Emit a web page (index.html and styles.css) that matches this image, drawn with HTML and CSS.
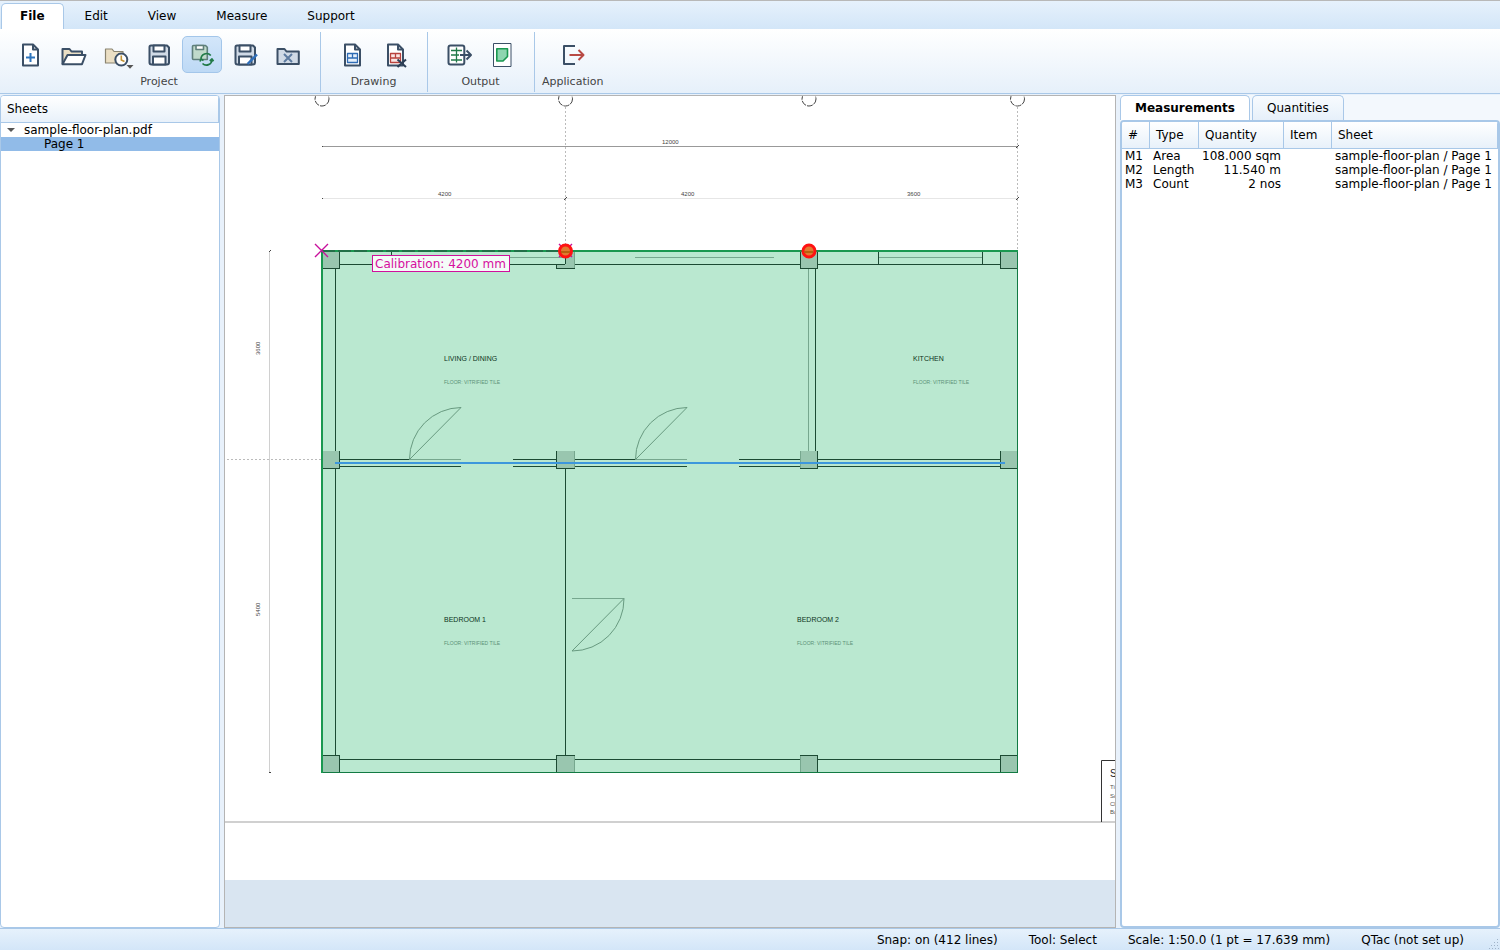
FILE: index.html
```html
<!DOCTYPE html>
<html lang="en">
<head>
<meta charset="utf-8">
<title>sample-floor-plan.pdf</title>
<link rel="stylesheet" href="styles.css">
</head>
<body>
<nav class="menu">
  <button class="menu-tab selected">File</button>
  <button class="menu-tab">Edit</button>
  <button class="menu-tab">View</button>
  <button class="menu-tab">Measure</button>
  <button class="menu-tab">Support</button>
</nav>
<header class="ribbon">
  <section class="group first">
    <div class="tools">
      <button class="tool" aria-label="New project"><svg class="icon" viewBox="0 0 28 28"><path class="slate white" d="M7 3.500h10l5 5v16H7z"/><path class="slate none" d="M17 3.500v5h5"/><path class="blue none" d="M14.500 12v9M10 16.500h9"/></svg></button>
      <button class="tool" aria-label="Open project"><svg class="icon" viewBox="0 0 28 28"><path class="slate tan" d="M3.500 23V8h7l2 2.500h10.500V14"/><path class="slate white" d="M8.500 14H26.500L23 23.200H3.500z"/></svg></button>
      <button class="tool" aria-label="Recent projects"><svg class="icon" viewBox="0 0 28 28"><path class="tanline tan" d="M3.500 22V8h6.500l2 2.500h9V22z"/><circle class="slate white" cx="19.300" cy="18.600" r="6"/><path class="gold none" d="M19.300 14.500v4.500l3.200 1.500"/><path class="arrow" d="M24.500 24h7l-3.500 3.800z"/></svg></button>
      <button class="tool" aria-label="Save project"><svg class="icon" viewBox="0 0 28 28"><path class="slate pale" d="M6 4.500h16l2 2V21.500q0 2-2 2H6.500q-2 0-2-2V6q0-1.500 1.500-1.500z"/><path class="slate white" d="M8.500 4.500h11v6h-11zM8 23.500v-8h12.500v8z"/></svg></button>
      <button class="tool active" aria-label="Auto save" aria-pressed="true"><svg class="icon" viewBox="0 0 28 28"><path class="moss greenpale" d="M5.500 4.500h12l1.800 1.800V18.500H5.500q-1 0-1-1v-12q0-1 1-1z"/><path class="moss white" d="M8 4.500h7.500v4H8z"/><path class="green none" d="M22.800 14.500a5.600 5.600 0 0 0-9.800 4M14.500 22.500a5.600 5.600 0 0 0 9.500-4M12 20.500l1-2.500 2.500 1.500M21.800 20l2.200-2 1.500 2.300"/></svg></button>
      <button class="tool" aria-label="Save project as"><svg class="icon" viewBox="0 0 28 28"><path class="slate pale" d="M6 4.500h16l2 2V21.500q0 2-2 2H6.500q-2 0-2-2V6q0-1.500 1.500-1.500z"/><path class="slate white" d="M8.500 4.500h11v6h-11zM8 23.500v-8h12.500v8z"/><path class="pen" d="M26 13.500l-9.500 9.500"/></svg></button>
      <button class="tool" aria-label="Close project"><svg class="icon" viewBox="0 0 28 28"><path class="slate pale" d="M3.500 23V8h7l2 2.500h12.300V23z"/><path class="steel none" d="M10 13l8 8M18 13l-8 8"/></svg></button>
    </div>
    <h2 class="group-name">Project</h2>
  </section>
  <section class="group">
    <div class="tools">
      <button class="tool" aria-label="Add drawing"><svg class="icon" viewBox="0 0 28 28"><path class="slate white" d="M7 3.500h10l5 5v16H7z"/><path class="slate none" d="M17 3.500v5h5"/><path class="bluethin ice" d="M9.500 12.500h10v9h-10zM9.500 17h10M14.500 12.500v4.500"/></svg></button>
      <button class="tool" aria-label="Remove drawing"><svg class="icon" viewBox="0 0 28 28"><path class="slate white" d="M7 3.500h10l5 5v16H7z"/><path class="slate none" d="M17 3.500v5h5"/><path class="redthin rose" d="M9.500 12.500h10v9h-10zM9.500 17h10M14.500 12.500v4.500"/><path class="cross none" d="M16.500 18.500l8.500 7.500M25 18.500l-8.500 7.500"/></svg></button>
    </div>
    <h2 class="group-name">Drawing</h2>
  </section>
  <section class="group">
    <div class="tools">
      <button class="tool" aria-label="Export table"><svg class="icon" viewBox="0 0 28 28"><rect class="slate white" x="3.500" y="4.500" width="15.800" height="19" rx="2"/><path class="greenthin none" d="M11.500 6.500v15M6 9.500h11M6 14h8M6 19h11"/><path class="slate none" d="M15 14h11M21.500 9.500L26 14l-4.500 4.500"/></svg></button>
      <button class="tool" aria-label="Export marked drawing"><svg class="icon" viewBox="0 0 28 28"><path class="slatethin white" d="M5.500 2.500h17.500v23H5.500z"/><path class="leaf" d="M8.800 7.800h10.700v7.700l-4.500 4.500H8.800z"/></svg></button>
    </div>
    <h2 class="group-name">Output</h2>
  </section>
  <section class="group last">
    <div class="tools">
      <button class="tool" aria-label="Exit"><svg class="icon" viewBox="0 0 28 28"><path class="slate none" d="M16 5H5v18h11"/><path class="red none" d="M10.500 14h14M19.500 9l5 5-5 5"/></svg></button>
    </div>
    <h2 class="group-name">Application</h2>
  </section>
</header>
<main class="workspace">
  <aside class="sheets">
    <h2 class="panel-head">Sheets</h2>
    <ul class="tree">
      <li class="row"><svg class="twisty" viewBox="0 0 8 4"><path d="M0 0h8L4 4z"/></svg>sample-floor-plan.pdf</li>
      <li class="row child">Page 1</li>
    </ul>
  </aside>
  <section class="viewport" aria-label="Drawing">
    <svg class="plan">
      <g transform="translate(-225 -96)">
        <rect class="paper" x="225" y="96" width="3000" height="784"/>
        <path class="frame" d="M225 822h3000"/>
        <g class="bubble">
          <circle cx="322" cy="99" r="7"/><circle cx="565.500" cy="99" r="7"/><circle cx="809" cy="99" r="7"/><circle cx="1017.500" cy="99" r="7"/>
        </g>
        <g class="crisp">
          <path class="grid" d="M565.500 107v143M1017.500 107v143M227 459.500h94"/>
          <path class="dim" d="M322 146.500h696"/>
          <path class="dimlight" d="M322 198.500h696"/>
          <path class="dimside" d="M269.500 251v521"/>
        </g>
        <path class="tick" d="M564 200l3-3M1016 200l3-3M1016 148l3-3M322 147l1-1M322 199l1-1M269 252l2-2M269 772.500h2"/>
        <g class="dimtext">
          <text x="662" y="144">12000</text><text x="438" y="196">4200</text><text x="681" y="196">4200</text><text x="907" y="196">3600</text>
          <text transform="translate(260 355) rotate(-90)">3600</text><text transform="translate(260 616) rotate(-90)">5400</text>
        </g>
        <g class="crisp">
          <rect class="area" x="322" y="251" width="695" height="521"/>
          <path class="column" d="M323 252h17v17h-17zM565 252h10v17h-19v-5h9zM800 252h18v17h-18zM1000 252h17v17h-17zM323 451h17v17h-17zM556 451h19v17h-19zM800 451h18v17h-18zM1000 451h17v17h-17zM323 755h17v17h-17zM556 755h19v17h-19zM800 755h18v17h-18zM1000 755h17v17h-17z"/>
          <path class="soft" d="M391 257.500h174M635 257.500h139M879 257.500h103M808.500 269v182M409 459.500h52M635 459.500h52M574.500 252v17M574.500 451v17M800.500 451v17M574.500 755v17M800.500 755v17M572 598.500h52"/>
          <path class="wall" d="M335.500 269v182M335.500 468v287M340 264.500h225M575 264.500h225M818 264.500h182M391.500 252v12M565.500 252v12M878.500 252v12M982.500 252v12M815.500 269v182M340 459.500h69M513 459.500h43M575 459.500h60M739 459.500h61M818 459.500h182M340 466.500h121M513 466.500h43M575 466.500h112M739 466.500h61M818 466.500h182M565.500 469v286M340 759.500h216M575 759.500h225M818 759.500h182"/>
          <path class="wall" d="M339.500 252v17M323 268.500h17M556.500 264v5M556 268.500h19M800.500 252v17M817.500 252v17M800 268.500h18M1000.500 252v17M1000 268.500h17M339.500 451v17M323 468.500h17M556.500 451v17M556 468.500h19M817.500 451v17M800 468.500h18M1000.500 451v17M1000 468.500h17M323 755.500h17M339.500 755v17M556 755.500h19M556.500 755v17M800 755.500h18M817.500 755v17M1000.500 755v17M1000 755.500h17"/>
          <path class="edge" d="M322 772.500h696M1017.500 250v523"/>
          <path class="edgethick" d="M321 251h697M322 250v523"/>
          <path class="calib" d="M322 251h243"/>
        </g>
        <path class="door" d="M409.500 459.500a52 52 0 0 1 51.500-52L409.500 459.500M635.500 459.500a52 52 0 0 1 51.500-52L635.500 459.500M624 598.500a52 52 0 0 1-52 52.500L624 598.500"/>
        <g class="room">
          <text x="444" y="361">LIVING / DINING</text><text x="913" y="361">KITCHEN</text><text x="444" y="622">BEDROOM 1</text><text x="797" y="622">BEDROOM 2</text>
        </g>
        <g class="floor">
          <text x="444" y="384">FLOOR: VITRIFIED TILE</text><text x="913" y="384">FLOOR: VITRIFIED TILE</text><text x="444" y="645">FLOOR: VITRIFIED TILE</text><text x="797" y="645">FLOOR: VITRIFIED TILE</text>
        </g>
        <path class="run" d="M335 463h670"/>
        <path class="mark" d="M315 244l13 13M328 244l-13 13M559 244l13 13M572 244l-13 13"/>
        <g class="count"><circle cx="565.500" cy="251" r="6"/><circle cx="809" cy="251" r="6"/></g>
        <path class="through" d="M561 252h9M804 252h9"/>
        <rect class="tag" x="372.500" y="255.500" width="137" height="16"/>
        <text class="tagtext" x="375" y="268">Calibration: 4200 mm</text>
        <path class="block" d="M1500 760.500H1101.500V822"/>
        <text class="title" x="1110" y="777">S</text>
        <g class="note"><text x="1110" y="789">Ti</text><text x="1110" y="798">Sc</text><text x="1110" y="806">Cl</text><text x="1110" y="814">Ba</text></g>
      </g>
    </svg>
  </section>
  <aside class="results">
    <div class="tabs" role="tablist">
      <button class="tab current" role="tab" aria-selected="true">Measurements</button>
      <button class="tab" role="tab" aria-selected="false">Quantities</button>
    </div>
    <div class="pane">
      <table class="list">
        <colgroup><col class="c-id"><col class="c-type"><col class="c-qty"><col class="c-item"><col></colgroup>
        <thead><tr><th>#</th><th>Type</th><th>Quantity</th><th>Item</th><th>Sheet</th></tr></thead>
        <tbody>
          <tr><td>M1</td><td>Area</td><td class="num">108.000 sqm</td><td></td><td>sample-floor-plan / Page 1</td></tr>
          <tr><td>M2</td><td>Length</td><td class="num">11.540 m</td><td></td><td>sample-floor-plan / Page 1</td></tr>
          <tr><td>M3</td><td>Count</td><td class="num">2 nos</td><td></td><td>sample-floor-plan / Page 1</td></tr>
        </tbody>
      </table>
    </div>
  </aside>
</main>
<footer class="status">
  <span>Snap: on (412 lines)</span><span>Tool: Select</span><span>Scale: 1:50.0 (1 pt = 17.639 mm)</span><span>QTac (not set up)</span>
  <svg class="grip" viewBox="0 0 10 10"><path d="M8 0h1v1h-1zM5 3h1v1h-1zM8 3h1v1h-1zM2 6h1v1h-1zM5 6h1v1h-1zM8 6h1v1h-1zM0 9h1v1h-1zM3 9h1v1h-1zM6 9h1v1h-1zM9 9h1v1h-1z"/></svg>
</footer>
</body>
</html>
```

FILE: styles.css
```css
* { box-sizing: border-box; }
body {
  margin: 0;
  height: 100vh;
  display: flex;
  flex-direction: column;
  overflow: hidden;
  background: #e8f1fb;
  color: #000;
  font: 12px/14px "DejaVu Sans", sans-serif;
}
button { font: inherit; color: inherit; margin: 0; }
h2 { margin: 0; font: inherit; }

.menu {
  display: flex;
  align-items: flex-end;
  height: 29px;
  padding-left: 1px;
  border-top: 1px solid #b8b8b8;
  background: linear-gradient(#e6f1fc, #d3e6f8);
}
.menu-tab {
  height: 26px;
  padding: 0 19px 2px;
  border: 1px solid transparent;
  border-bottom: 0;
  border-radius: 5px 5px 0 0;
  background: none;
}
.menu-tab.selected {
  padding: 0 18px 2px;
  border-color: #a9c8e8;
  background: #fff;
  font-weight: bold;
  margin-right: 1px;
}

.ribbon {
  display: flex;
  height: 65px;
  padding: 3px 0 1px;
  border-bottom: 1px solid #a9c8e8;
  background: linear-gradient(#fff, #e6f0fa);
}
.group {
  display: flex;
  flex-direction: column;
  align-items: center;
  padding: 4px 12px 0 11px;
  border-right: 1px solid #a9c8e8;
}
.group.first { padding-left: 10px; }
.group.last { padding: 4px 7px 0; border: 0; }
.tools { display: flex; gap: 3px; }
.tool {
  display: flex;
  align-items: center;
  justify-content: center;
  width: 40px;
  height: 37px;
  padding: 0;
  border: 1px solid transparent;
  border-radius: 5px;
  background: none;
}
.tool.active { border-color: #a3c6ea; background: linear-gradient(#d3e6fa, #bdd9f5); }
.group-name { margin-top: 2px; font-size: 11px; color: #444; }

.icon { width: 28px; height: 28px; overflow: visible; stroke-width: 2; stroke-linejoin: round; }
.slate { stroke: #3b4f66; }
.slatethin { stroke: #3b4f66; stroke-width: 1; }
.tanline { stroke: #8a8470; stroke-width: 1.2; }
.moss { stroke: #5f7f7b; stroke-width: 1.6; }
.blue { stroke: #2e75bd; }
.bluethin { stroke: #2e6bb5; stroke-width: 1.3; }
.red { stroke: #b84a44; stroke-width: 2; }
.redthin { stroke: #b8423d; stroke-width: 1.3; }
.green { stroke: #217a48; stroke-width: 1.7; }
.greenthin { stroke: #217a48; stroke-width: 1.3; }
.gold { stroke: #c29436; stroke-width: 1.6; }
.steel { stroke: #5d7ba0; stroke-width: 2; }
.cross { stroke: #2c3e55; stroke-width: 2; }
.pen { stroke: #2f6fba; stroke-width: 2.4; }
.none { fill: none; }
.white { fill: #fff; }
.tan { fill: #ebdfc4; }
.pale { fill: #d0dae6; }
.greenpale { fill: #c0dacb; }
.ice { fill: #e6f0fb; }
.rose { fill: #fbe6e4; }
.leaf { fill: #8ed6b0; stroke: #1a9850; stroke-width: 1.6; }
.arrow { fill: #555; }

.workspace { flex: 1; min-height: 0; display: flex; padding-top: 1px; background: #e8f1fb; }
.sheets {
  width: 220px;
  border: 1px solid #a9c8e8;
  border-radius: 4px;
  background: #fff;
  overflow: hidden;
}
.panel-head {
  height: 27px;
  padding: 6px;
  border-right: 1px solid #a9c8e8;
  border-bottom: 1px solid #a9c8e8;
  background: linear-gradient(#fff, #e8f1fa);
}
.tree { margin: 0; padding: 0; list-style: none; }
.row { display: flex; align-items: center; gap: 9px; height: 14px; padding-left: 6px; }
.row.child { padding-left: 43px; background: #91bbe8; }
.twisty { width: 8px; height: 4px; fill: #555; }

.viewport { flex: 1; min-width: 0; margin: 0 4px; border: 1px solid #b4b4b4; background: #d9e5f1; }
.plan { display: block; width: 100%; height: 100%; overflow: hidden; fill: none; font-family: "Liberation Sans", sans-serif; }
.crisp { shape-rendering: crispEdges; }
.paper { fill: #fff; }
.frame { stroke: #d0d0d0; stroke-width: 2; }
.bubble { stroke: #444; stroke-dasharray: 6 1; }
.grid { stroke: #bbb; stroke-dasharray: 2 2; }
.dim { stroke: #999; }
.dimlight { stroke: #e6e6e6; }
.dimside { stroke: #d0d0d0; }
.tick { stroke: #444; }
.dimtext { fill: #444; font-size: 6px; }
.area { fill: #bae8d0; }
.column { fill: #99c6af; }
.wall { stroke: #1c4a33; }
.soft { stroke: #76a78e; }
.edge { stroke: #127a43; }
.edgethick { stroke: #1a9850; stroke-width: 2; }
.calib { stroke: #227048; stroke-width: 2; stroke-dasharray: 13 3; }
.door { stroke: #689a80; stroke-width: 1; }
.room { fill: #0c3320; font-size: 7px; }
.floor { fill: #5c9277; font-size: 5px; }
.run { stroke: #3d97dc; stroke-width: 2; }
.mark { stroke: #c8109c; stroke-width: 1.4; }
.count { fill: #e27a30; stroke: #ff1212; stroke-width: 3; }
.through { stroke: #b8600f; stroke-width: 2; }
.tag { fill: #f5fbf8; stroke: #d0109c; }
.tagtext { fill: #d6109f; font: 12px "DejaVu Sans", sans-serif; }
.block { stroke: #333; }
.title { fill: #222; font-size: 10px; }
.note { fill: #555; font-size: 6px; }

.results { width: 380px; display: flex; flex-direction: column; background: #f3f8fd; }
.tabs { display: flex; gap: 2px; height: 25px; }
.tab {
  padding: 0 14px;
  border: 1px solid #a9c8e8;
  border-bottom: 0;
  border-radius: 5px 5px 0 0;
  background: linear-gradient(#f8fbfe, #e6f0fa);
}
.tab.current { background: #fff; font-weight: bold; }
.pane { flex: 1; border: 2px solid #a9c8e8; border-radius: 4px; background: #fff; overflow: hidden; }
.list { width: 100%; table-layout: fixed; border-collapse: separate; border-spacing: 0; }
.c-id { width: 28px; }
.c-type { width: 49px; }
.c-qty { width: 85px; }
.c-item { width: 48px; }
.list th {
  height: 27px;
  padding: 0 6px;
  border-right: 1px solid #a9c8e8;
  border-bottom: 1px solid #a9c8e8;
  background: linear-gradient(#fff, #e8f1fa);
  font-weight: normal;
  text-align: left;
}
.list td { height: 14px; padding: 0 3px; white-space: nowrap; }
.list .num { text-align: right; }

.status {
  position: relative;
  display: flex;
  justify-content: flex-end;
  align-items: center;
  gap: 31px;
  height: 22px;
  padding: 1px 36px 0 0;
  border-top: 1px solid #a9c8e8;
  background: linear-gradient(#e6f1fc, #d3e6f8);
}
.grip { position: absolute; right: 1px; bottom: 1px; width: 10px; height: 10px; fill: #9fb3c8; }
```
